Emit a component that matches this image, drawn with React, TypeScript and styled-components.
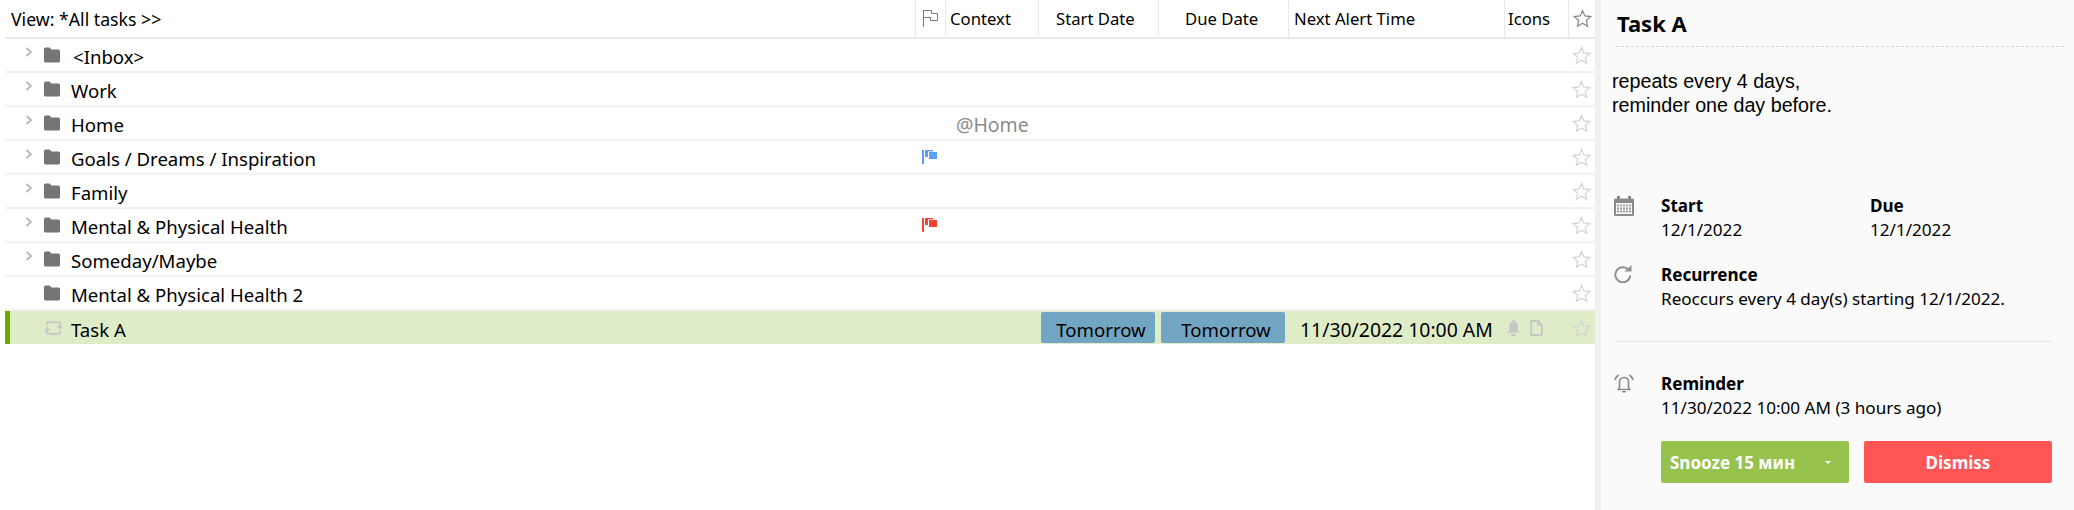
import React from "react";
import styled, { createGlobalStyle } from "styled-components";

const GRID_COLUMNS = "910px 30px 93px 120px 130px 216px 64px 27px";

const tasks = [
  { name: "<Inbox>", expandable: true, indent: 2 },
  { name: "Work", expandable: true },
  { name: "Home", expandable: true, context: "@Home" },
  { name: "Goals / Dreams / Inspiration", expandable: true, flag: "#5b9ef7" },
  { name: "Family", expandable: true },
  { name: "Mental & Physical Health", expandable: true, flag: "#f44336" },
  { name: "Someday/Maybe", expandable: true },
  { name: "Mental & Physical Health 2", expandable: false },
];

const GlobalStyle = createGlobalStyle`
  html, body {
    margin: 0;
    padding: 0;
    background: #fff;
    font-family: "Noto Sans", "Open Sans", sans-serif;
    color: #000;
  }
  * {
    box-sizing: border-box;
  }
`;

const Star = ({ color = "#d4d4d4" }: { color?: string }) => (
  <svg width="19" height="19" viewBox="0 0 18 18">
    <polygon
      points="9,1.5 11.2,6.6 16.8,7.1 12.6,10.8 13.8,16.3 9,13.4 4.2,16.3 5.4,10.8 1.2,7.1 6.8,6.6"
      fill="none"
      stroke={color}
      strokeWidth="1.2"
    />
  </svg>
);

const Chevron = () => (
  <svg width="8" height="11" viewBox="0 0 8 11">
    <path d="M1.5 1 L6 5 L1.5 9" fill="none" stroke="#b5b5b5" strokeWidth="1.7" />
  </svg>
);

const Folder = () => (
  <svg width="16" height="16" viewBox="0 0 16 16">
    <path
      d="M0 2 Q0 0.5 1.5 0.5 H5.5 L7.5 2.5 H14.5 Q16 2.5 16 4 V14 Q16 15.5 14.5 15.5 H1.5 Q0 15.5 0 14 Z"
      fill="#757575"
    />
  </svg>
);

const RepeatIcon = () => (
  <svg width="19" height="16" viewBox="0 0 20 16">
    <path
      d="M3 5 V3.5 Q3 2 4.5 2 H15.5 Q17 2 17 3.5 V6 M17 11 V12.5 Q17 14 15.5 14 H4.5 Q3 14 3 12.5 V10"
      fill="none"
      stroke="#c8c8c8"
      strokeWidth="2.2"
    />
    <path d="M13.2 5.5 H20 L16.6 9.5 Z M0 10.5 H6.8 L3.4 6.5 Z" fill="#c8c8c8" />
  </svg>
);

const ColorFlag = ({ color }: { color: string }) => (
  <svg width="15" height="14" viewBox="0 0 15 14">
    <rect x="0" y="0" width="2" height="14" fill={color} />
    <rect x="3" y="0" width="8" height="1.4" fill={color} />
    <rect x="3" y="0" width="3" height="7" fill={color} />
    <rect x="7" y="2" width="8" height="7" fill={color} />
  </svg>
);

const HeaderFlag = () => (
  <svg width="15" height="17" viewBox="0 0 15 17">
    <path d="M0.5 0 V17 M0.5 0.5 H8.5 V3.5 H14.5 V10.5 H7.5 V7.5 H0.5" fill="none" stroke="#7a7a7a" strokeWidth="1" />
  </svg>
);

const SmallBell = () => (
  <svg width="13" height="16" viewBox="0 0 12 15">
    <path d="M6 0 Q7.2 0 7.2 1.4 Q10 2.2 10 5.5 V10 L12 12 H0 L2 10 V5.5 Q2 2.2 4.8 1.4 Q4.8 0 6 0 Z" fill="#c6c6c6" />
    <rect x="4" y="13" width="4" height="2" fill="#c6c6c6" />
  </svg>
);

const SmallNote = () => (
  <svg width="13" height="16" viewBox="0 0 12 15">
    <path d="M1 1 H7.5 L11 4.5 V14 H1 Z M7.5 1 V4.5 H11" fill="none" stroke="#c6c6c6" strokeWidth="1.8" />
  </svg>
);

const CalendarIcon = () => (
  <svg width="20" height="20" viewBox="0 0 20 20">
    <path d="M1.5 2.5 H18.5 Q20 2.5 20 4 V18.5 Q20 20 18.5 20 H1.5 Q0 20 0 18.5 V4 Q0 2.5 1.5 2.5 Z" fill="#8a8a8a" />
    <rect x="3" y="0" width="3" height="4" fill="#8a8a8a" />
    <rect x="14" y="0" width="3" height="4" fill="#8a8a8a" />
    <rect x="2" y="7" width="16" height="11" fill="#fafafa" />
    {[3, 6, 9, 12, 15].map((x) =>
      [8.5, 11.5, 14.5].map((y) => <rect key={`${x}-${y}`} x={x} y={y} width="2" height="2" fill="#9a9a9a" />)
    )}
  </svg>
);

const RecurrenceIcon = () => (
  <svg width="18" height="18" viewBox="0 0 18 18">
    <path d="M14.6 5 A7.5 7.5 0 1 0 16.3 10.5" fill="none" stroke="#8f8f8f" strokeWidth="2" />
    <path d="M10.5 6.5 L17.5 6.5 L17.5 0 Z" fill="#8f8f8f" />
  </svg>
);

const ReminderIcon = () => (
  <svg width="20" height="19" viewBox="0 0 20 19">
    <path d="M5.5 14.5 V8.5 Q5.5 3.5 10 3.5 Q14.5 3.5 14.5 8.5 V14.5 L16.5 15.5 H3.5 Z" fill="none" stroke="#8a8a8a" strokeWidth="1.6" />
    <path d="M8 17 H12 V18 Q10 19.5 8 18 Z" fill="#8a8a8a" />
    <path d="M1 6 Q1.8 2.8 4.6 1 M19 6 Q18.2 2.8 15.4 1" fill="none" stroke="#8a8a8a" strokeWidth="1.6" />
  </svg>
);

const App = () => {
  return (
    <Page>
      <GlobalStyle />
      <TaskList>
        <HeaderRow>
          <ViewCell>View: *All tasks &gt;&gt;</ViewCell>
          <HeaderCell $center><HeaderFlag /></HeaderCell>
          <HeaderCell $pad={4}>Context</HeaderCell>
          <HeaderCell $pad={17}>Start Date</HeaderCell>
          <HeaderCell $pad={26}>Due Date</HeaderCell>
          <HeaderCell>Next Alert Time</HeaderCell>
          <HeaderCell $pad={3}>Icons</HeaderCell>
          <HeaderCell $center><Star color="#8a8a8a" /></HeaderCell>
        </HeaderRow>
        {tasks.map((task) => (
          <TaskRow key={task.name}>
            <NameCell>
              <ChevronSlot>{task.expandable && <Chevron />}</ChevronSlot>
              <IconSlot><Folder /></IconSlot>
              <TaskName $indent={task.indent}>{task.name}</TaskName>
            </NameCell>
            <FlagCell>{task.flag && <ColorFlag color={task.flag} />}</FlagCell>
            <ContextCell>{task.context}</ContextCell>
            <span />
            <span />
            <span />
            <span />
            <StarCell><Star /></StarCell>
          </TaskRow>
        ))}
        <TaskRow $selected>
          <NameCell>
            <ChevronSlot />
            <IconSlot><RepeatIcon /></IconSlot>
            <TaskName>Task A</TaskName>
          </NameCell>
          <span />
          <span />
          <BadgeCell><DateBadge>Tomorrow</DateBadge></BadgeCell>
          <BadgeCell><DateBadge>Tomorrow</DateBadge></BadgeCell>
          <AlertCell>11/30/2022 10:00 AM</AlertCell>
          <IconsCell><SmallBell /><SmallNote /></IconsCell>
          <StarCell><Star /></StarCell>
        </TaskRow>
      </TaskList>
      <Splitter />
      <DetailPanel>
        <Title>Task A</Title>
        <Note>
          repeats every 4 days,
          <br />
          reminder one day before.
        </Note>
        <Section $top={77}>
          <SectionIcon><CalendarIcon /></SectionIcon>
          <DateColumns>
            <div>
              <Label>Start</Label>
              <Value>12/1/2022</Value>
            </div>
            <div>
              <Label>Due</Label>
              <Value>12/1/2022</Value>
            </div>
          </DateColumns>
        </Section>
        <Section $top={21}>
          <SectionIcon><RecurrenceIcon /></SectionIcon>
          <div>
            <Label>Recurrence</Label>
            <Value>Reoccurs every 4 day(s) starting 12/1/2022.</Value>
          </div>
        </Section>
        <Divider />
        <Section $top={30}>
          <SectionIcon><ReminderIcon /></SectionIcon>
          <div>
            <Label>Reminder</Label>
            <Value>11/30/2022 10:00 AM (3 hours ago)</Value>
            <Buttons>
              <SnoozeButton>
                Snooze 15 мин
                <Caret />
              </SnoozeButton>
              <DismissButton>Dismiss</DismissButton>
            </Buttons>
          </div>
        </Section>
      </DetailPanel>
    </Page>
  );
};

export default App;

const Page = styled.div`
  display: flex;
  width: 2074px;
  height: 510px;
  overflow: hidden;
  background: #fff;
`;
const TaskList = styled.div`
  width: 1595px;
  padding-left: 5px;
  flex-shrink: 0;
`;
const HeaderRow = styled.div`
  display: grid;
  grid-template-columns: ${GRID_COLUMNS};
  height: 39px;
  border-bottom: 2px solid #e8e8e8;
  font-size: 16.7px;
`;
const ViewCell = styled.div`
  display: flex;
  align-items: center;
  padding-left: 6px;
  font-size: 17.7px;
`;
const HeaderCell = styled.div<{ $center?: boolean; $pad?: number }>`
  display: flex;
  align-items: center;
  justify-content: ${(p) => (p.$center ? "center" : "flex-start")};
  padding-left: ${(p) => (p.$center ? 0 : p.$pad ?? 5)}px;
  border-left: 1px solid #e8e8e8;
`;
const TaskRow = styled.div<{ $selected?: boolean }>`
  display: grid;
  grid-template-columns: ${GRID_COLUMNS};
  height: ${(p) => (p.$selected ? 33 : 34)}px;
  padding-top: ${(p) => (p.$selected ? 4 : 3)}px;
  border-bottom: ${(p) => (p.$selected ? "0" : "2px solid #f2f2f2")};
  background: ${(p) => (p.$selected ? "#dfecc8" : "#fff")};
  box-shadow: ${(p) => (p.$selected ? "inset 5px 0 0 #6aa902" : "none")};
  font-size: 18.6px;
`;
const NameCell = styled.div`
  display: flex;
  align-items: center;
`;
const ChevronSlot = styled.div`
  width: 39px;
  padding-left: 20px;
  margin-top: -9px;
  display: flex;
`;
const IconSlot = styled.div`
  width: 27px;
  display: flex;
  margin-top: -3px;
`;
const TaskName = styled.span<{ $indent?: number }>`
  margin-left: ${(p) => p.$indent ?? 0}px;
`;
const FlagCell = styled.div`
  display: flex;
  align-items: center;
  padding-left: 7px;
  margin-top: -3px;
`;
const ContextCell = styled.div`
  display: flex;
  align-items: center;
  padding-left: 11px;
  color: #8c8c8c;
  font-size: 19.4px;
`;
const StarCell = styled.div`
  display: flex;
  align-items: center;
  justify-content: center;
  margin-top: -2px;
`;
const BadgeCell = styled.div`
  padding: 0 3px;
`;
const DateBadge = styled.div`
  display: flex;
  align-items: center;
  justify-content: center;
  height: 31px;
  margin-top: -3px;
  padding: 3px 0 0 6px;
  background: #72a5c1;
  border-radius: 2px;
`;
const AlertCell = styled.div`
  display: flex;
  align-items: center;
  padding-left: 12px;
  font-size: 19.4px;
`;
const IconsCell = styled.div`
  display: flex;
  align-items: center;
  gap: 10px;
  padding-left: 3px;
  margin-top: -3px;
`;
const Splitter = styled.div`
  width: 6px;
  background: #f0f0f0;
  flex-shrink: 0;
`;
const DetailPanel = styled.div`
  flex: 1;
  background: #fafafa;
  padding-left: 11px;
  font-size: 17.1px;
`;
const Title = styled.div`
  height: 47px;
  margin: 0 10px 0 4px;
  padding: 5px 0 0 1px;
  border-bottom: 1px dashed #d6d6d6;
  font-size: 22px;
  font-weight: 700;
  line-height: 36px;
`;
const Note = styled.div`
  margin-top: 22px;
  font-family: "Liberation Sans", Arial, sans-serif;
  font-size: 19.7px;
  line-height: 24px;
`;
const Section = styled.div<{ $top: number }>`
  display: grid;
  grid-template-columns: 47px 1fr;
  margin: ${(p) => p.$top}px 0 0 2px;
`;
const SectionIcon = styled.div`
  padding-top: 2px;
`;
const DateColumns = styled.div`
  display: grid;
  grid-template-columns: 209px 1fr;
`;
const Label = styled.div`
  font-weight: 700;
  line-height: 24px;
`;
const Value = styled.div`
  line-height: 24px;
`;
const Divider = styled.div`
  height: 1px;
  margin: 30px 21px 0 3px;
  background: #e8e8e8;
`;
const Buttons = styled.div`
  display: grid;
  grid-template-columns: 188px 188px;
  gap: 15px;
  margin-top: 21px;
`;
const PanelButton = styled.button`
  height: 42px;
  border: 0;
  border-radius: 2px;
  color: #fff;
  font: 700 17px "Noto Sans", sans-serif;
`;
const SnoozeButton = styled(PanelButton)`
  display: flex;
  align-items: center;
  justify-content: space-between;
  padding: 0 18px 0 9px;
  background: #97c24d;
`;
const DismissButton = styled(PanelButton)`
  background: #ff5555;
`;
const Caret = styled.span`
  width: 0;
  height: 0;
  border-left: 3px solid transparent;
  border-right: 3px solid transparent;
  border-top: 3px solid #fff;
`;
